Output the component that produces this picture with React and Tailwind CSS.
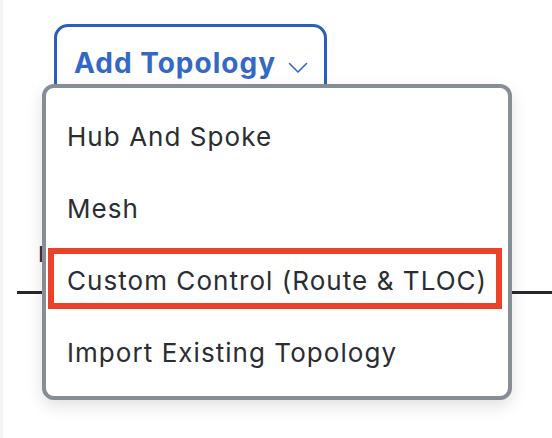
import React from 'react';

const items = ['Hub And Spoke', 'Mesh', 'Custom Control (Route & TLOC)', 'Import Existing Topology'];

export default function App() {
    return (
        <div className="relative flex w-[552px] h-[438px] overflow-hidden bg-white font-['Inter',sans-serif]">
            <div className="w-[3px] shrink-0 bg-[#f3f4f5]" />

            <div className="flex-1 flex flex-col">
                <button className="ml-[51px] mt-[24px] w-[273px] h-[80px] shrink-0 flex items-start gap-[12px] pl-[17px] pt-[23px] border-[3px] border-[#2b5fbf] rounded-[14px] bg-white text-[#3468c6]">
                    <span className="text-[28px] leading-[27px] font-bold tracking-[1px]">Add Topology</span>
                    <svg width="20" height="12" viewBox="0 0 20 12" fill="none" className="mt-[12px]">
                        <path d="M1.5 1.5 L10 10 L18.5 1.5" stroke="#3468c6" strokeWidth="1.6" strokeLinecap="round" strokeLinejoin="round" />
                    </svg>
                </button>

                <div className="ml-[35px] mt-[139px] text-[22px] leading-[22px] text-[#25282c]">Interval</div>
                <div className="ml-[14px] mt-[26px] h-[3px] bg-[#25282c]" />
            </div>

            {/* dropdown menu */}
            <div className="absolute left-[42px] top-[84px] w-[470px] h-[316px] border-4 border-[#878d95] rounded-[12px] bg-white shadow-[0_6px_16px_rgba(0,0,0,0.12)] pt-[12px] pb-[9px]">
                {items.map((label, i) => (
                    <div key={label} className="relative h-[72px] flex items-center pl-[21px] text-[26px] text-[#2a2d33] tracking-[1.05px]">
                        {label}
                        {i === 2 && (
                            <div className="absolute left-[2px] right-[6px] top-[4px] bottom-[7px] border-[6px] border-[#e8432a] blur-[0.5px]" />
                        )}
                    </div>
                ))}
            </div>
        </div>
    );
}
